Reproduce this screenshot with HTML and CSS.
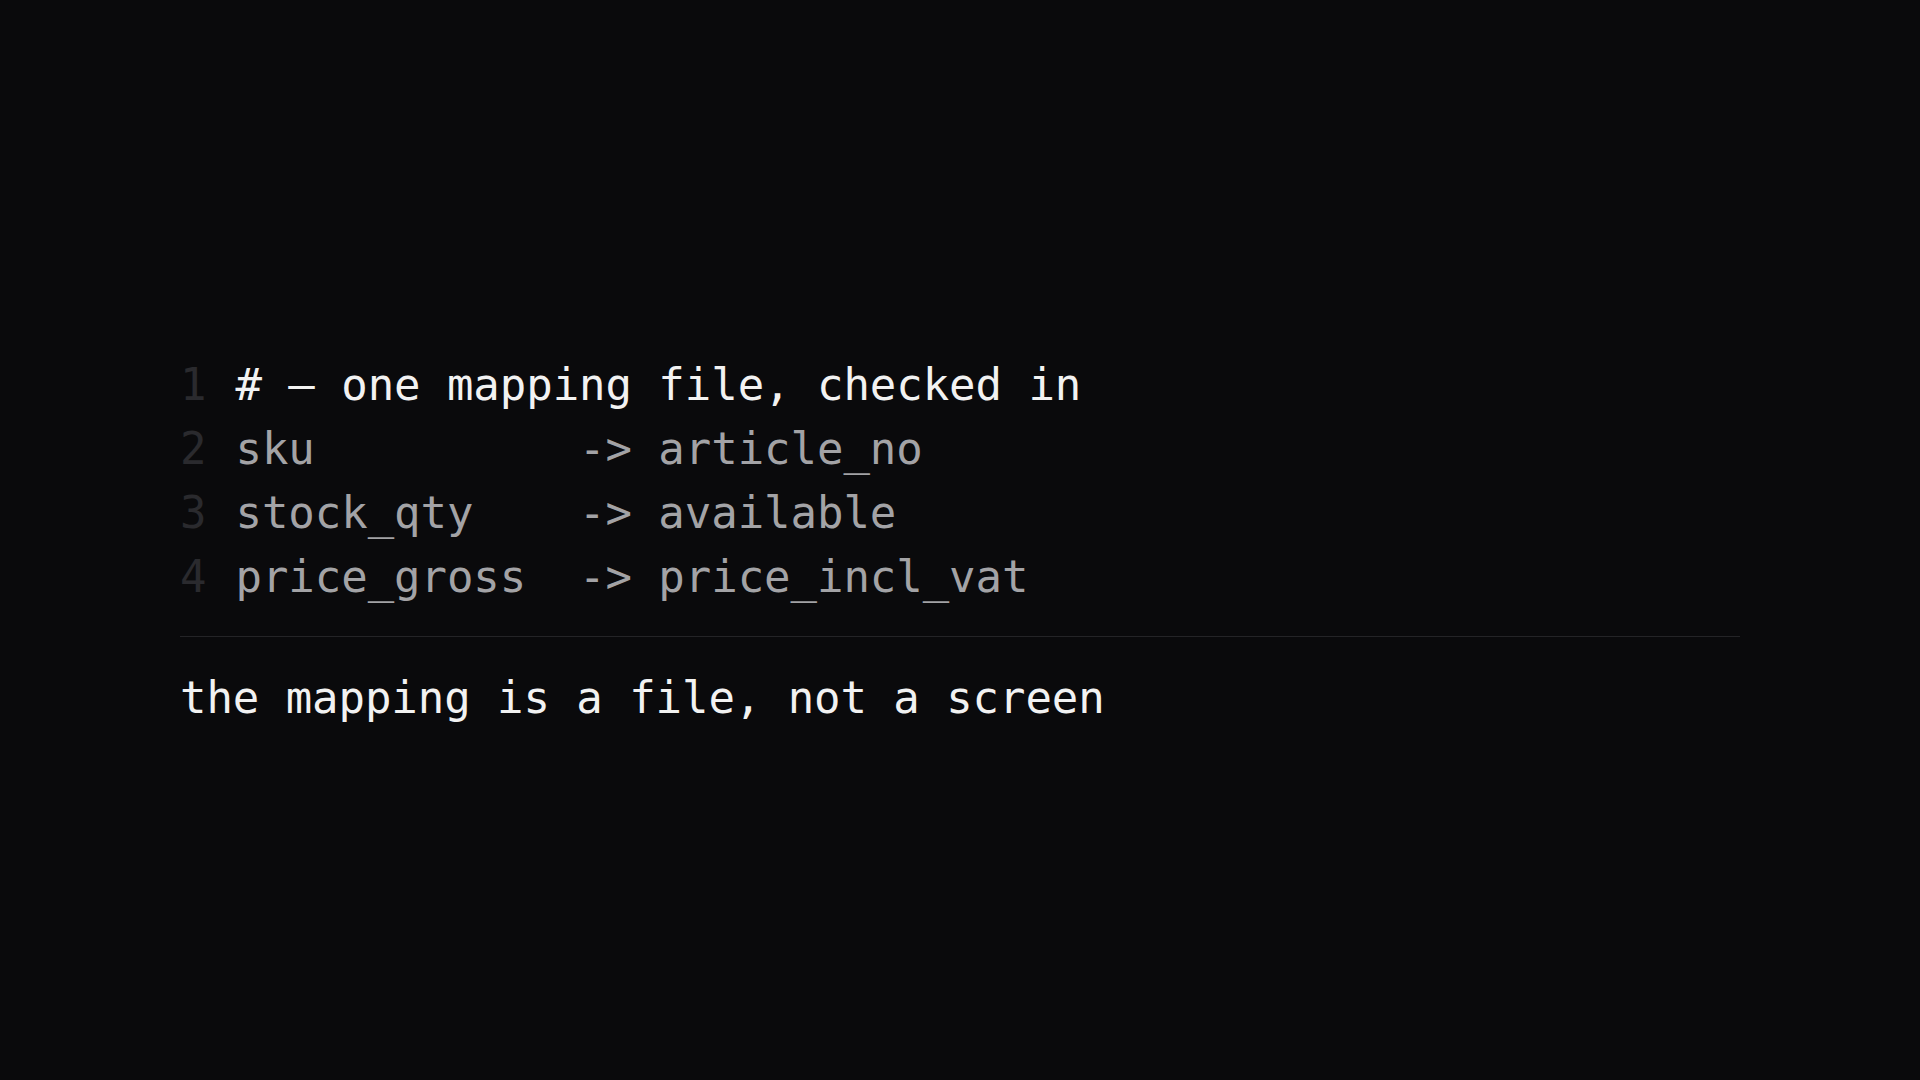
FILE: index.html
```html
<!DOCTYPE html>
<html lang="en">
<head>
<meta charset="utf-8">
<title>mapping</title>
<link rel="stylesheet" href="styles.css">
</head>
<body>
<main class="stage">
  <section class="panel">
    <div class="code">
      <div class="line head"><span class="ln">1</span><span class="src"># — one mapping file, checked in</span></div>
      <div class="line"><span class="ln">2</span><span class="src">sku          -&gt; article_no</span></div>
      <div class="line"><span class="ln">3</span><span class="src">stock_qty    -&gt; available</span></div>
      <div class="line"><span class="ln">4</span><span class="src">price_gross  -&gt; price_incl_vat</span></div>
    </div>
    <hr class="rule">
    <p class="caption">the mapping is a file, not a screen</p>
  </section>
</main>
</body>
</html>
```

FILE: styles.css
```css
html, body {
  margin: 0;
  padding: 0;
  background: #0a0a0c;
}
body {
  font-family: "DejaVu Sans Mono", "Liberation Mono", monospace;
}
.stage {
  width: 1920px;
  height: 1080px;
  display: flex;
  align-items: center;
  box-sizing: border-box;
  padding: 2px 180px 0;
}
.panel {
  width: 100%;
}
.code {
  font-size: 44px;
  line-height: 64px;
  letter-spacing: -0.06px;
}
.line {
  display: flex;
  white-space: pre;
}
.ln {
  width: 1ch;
  margin-right: 29px;
  color: #2a2a2e;
}
.src {
  color: #a3a3a6;
}
.head .src {
  color: #f2f2f2;
}
.rule {
  margin: 27px 0 0;
  border: 0;
  height: 1px;
  background: #242427;
}
.caption {
  margin: 29px 0 0;
  font-size: 44px;
  line-height: 64px;
  letter-spacing: -0.07px;
  color: #f2f2f2;
}
```
